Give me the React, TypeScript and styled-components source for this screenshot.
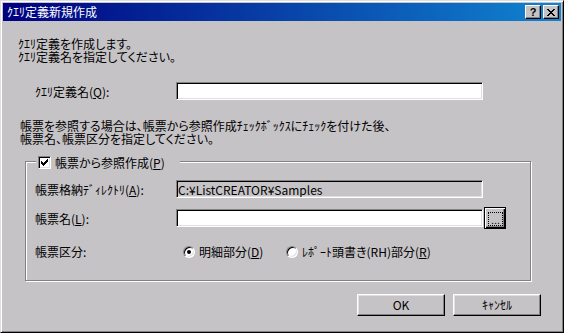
import React from "react";
import styled, { createGlobalStyle } from "styled-components";

const FACE = "#c6c3c6";
const LIGHT = "#dfdfdf";
const SHADOW = "#848284";
const DARK = "#000000";

const GlobalStyle = createGlobalStyle`
  html, body { margin: 0; padding: 0; background: ${FACE}; }
  body {
    font-family: "Noto Sans CJK JP", "Noto Sans", sans-serif;
    font-size: 12px;
    font-feature-settings: "palt";
    color: #000;
  }
  * { box-sizing: border-box; }
`;

const Window = styled.div`
  width: 564px;
  height: 333px;
  display: flex;
  flex-direction: column;
  background: ${FACE};
  border: 1px solid;
  border-color: ${LIGHT} ${DARK} ${DARK} ${LIGHT};
  box-shadow: inset 1px 1px 0 #fff, inset -1px -1px 0 ${SHADOW};
  padding: 2px;
`;

const TitleBar = styled.div`
  height: 18px;
  display: flex;
  align-items: center;
  gap: 2px;
  padding: 0 2px;
  background: linear-gradient(to right, #000080, #1084d0);
  color: #fff;
`;

const TitleText = styled.span`
  flex: 1;
  padding-left: 2px;
  font-size: 12px;
  line-height: 18px;
  white-space: nowrap;
`;

const CaptionButton = styled.div`
  width: 16px;
  height: 14px;
  display: flex;
  align-items: center;
  justify-content: center;
  background: ${FACE};
  border: 1px solid;
  border-color: #fff ${DARK} ${DARK} #fff;
  box-shadow: inset -1px -1px 0 ${SHADOW};
  color: #000;
  font: bold 11px "Liberation Sans", Arial, sans-serif;
  line-height: 12px;
`;

const Body = styled.div`
  flex: 1;
  display: flex;
  flex-direction: column;
  align-items: flex-start;
  padding: 16px 0 0 0;
`;

const Para = styled.div<{ $indent: number; $top: number }>`
  margin: ${(p) => p.$top}px 0 0 ${(p) => p.$indent}px;
  line-height: 13px;
  white-space: nowrap;
`;

const Line = styled.div`
  height: 13px;
`;

const FieldRow = styled.div<{ $indent: number; $top: number }>`
  display: grid;
  grid-template-columns: 140px 307px auto;
  column-gap: 1px;
  align-items: center;
  margin: ${(p) => p.$top}px 0 0 ${(p) => p.$indent}px;
`;

const Label = styled.span`
  line-height: 13px;
  white-space: nowrap;
`;

const TextBox = styled.input<{ $dim?: boolean }>`
  width: 307px;
  height: 18px;
  margin: 0;
  padding: 0 1px;
  background: ${(p) => (p.$dim ? FACE : "#fff")};
  border: 1px solid;
  border-color: ${SHADOW} #fff #fff ${SHADOW};
  box-shadow: inset 1px 1px 0 ${DARK}, inset -1px -1px 0 ${LIGHT};
  font: inherit;
  font-size: 12px;
  line-height: 16px;
  color: #000;
  outline: none;
`;

const GroupBox = styled.div`
  margin: 16px 0 0 22px;
  width: 506px;
  border: 1px solid ${SHADOW};
  box-shadow: inset 1px 1px 0 #fff, 1px 1px 0 #fff;
  padding: 0 0 22px 0;
  display: flex;
  flex-direction: column;
  align-items: flex-start;
`;

const Legend = styled.label`
  display: flex;
  align-items: center;
  gap: 4px;
  width: 144px;
  height: 13px;
  margin: -6px 0 0 10px;
  padding-left: 2px;
  background: ${FACE};
  line-height: 13px;
  white-space: nowrap;
`;

const CheckBox = styled.span`
  width: 13px;
  height: 13px;
  flex-shrink: 0;
  display: flex;
  align-items: center;
  justify-content: center;
  background: #fff;
  border: 1px solid;
  border-color: ${SHADOW} #fff #fff ${SHADOW};
  box-shadow: inset 1px 1px 0 ${DARK}, inset -1px -1px 0 ${LIGHT};
`;

const BrowseButton = styled.button`
  width: 22px;
  height: 22px;
  margin: 0;
  padding: 4px 2px 2px 3px;
  display: flex;
  background: ${FACE};
  border: 1px solid #000;
  box-shadow: inset 1px 1px 0 #fff, inset -1px -1px 0 #000, inset -2px -2px 0 ${SHADOW};
`;

const FocusRect = styled.span`
  flex: 1;
  display: flex;
  align-items: flex-end;
  justify-content: center;
  border: 1px dotted #000;
  font: 11px "Liberation Sans", Arial, sans-serif;
  line-height: 10px;
  color: #000;
`;

const RadioGroup = styled.div`
  display: flex;
  align-items: center;
  padding-left: 7px;
`;

const RadioOption = styled.label<{ $width?: number }>`
  display: flex;
  align-items: center;
  gap: 4px;
  width: ${(p) => (p.$width ? `${p.$width}px` : "auto")};
  line-height: 13px;
  white-space: nowrap;
`;

const RadioCircle = styled.span<{ $checked?: boolean }>`
  width: 12px;
  height: 12px;
  flex-shrink: 0;
  border-radius: 50%;
  display: flex;
  align-items: center;
  justify-content: center;
  background: #fff;
  border: 1px solid;
  border-color: ${SHADOW} #fff #fff ${SHADOW};
  box-shadow: inset 1px 1px 0 ${DARK}, inset -1px -1px 0 ${LIGHT};
  &::after {
    content: "";
    width: 4px;
    height: 4px;
    border-radius: 50%;
    background: ${(p) => (p.$checked ? "#000" : "transparent")};
  }
`;

const ButtonRow = styled.div`
  align-self: stretch;
  display: flex;
  justify-content: flex-end;
  gap: 8px;
  margin-top: 13px;
  padding-right: 20px;
`;

const PushButton = styled.button`
  width: 88px;
  height: 22px;
  margin: 0;
  padding: 0;
  background: ${FACE};
  border: 1px solid;
  border-color: #fff ${DARK} ${DARK} #fff;
  box-shadow: inset -1px -1px 0 ${SHADOW}, inset 1px 1px 0 ${LIGHT};
  font: inherit;
  font-size: 12px;
  line-height: 18px;
  color: #000;
`;

const CheckMark = () => (
  <svg width="7" height="7" viewBox="0 0 7 7" shapeRendering="crispEdges">
    <path
      d="M0 2h1v3H0z M1 3h1v3H1z M2 4h1v3H2z M3 3h1v3H3z M4 2h1v3H4z M5 1h1v3H5z M6 0h1v3H6z"
      fill="#000"
    />
  </svg>
);

const CloseGlyph = () => (
  <svg width="8" height="7" viewBox="0 0 8 7" shapeRendering="crispEdges">
    <path
      d="M0 0h2v1H0z M6 0h2v1H6z M1 1h2v1H1z M5 1h2v1H5z M2 2h4v1H2z M3 3h2v1H3z M2 4h4v1H2z M1 5h2v1H1z M5 5h2v1H5z M0 6h2v1H0z M6 6h2v1H6z"
      fill="#000"
    />
  </svg>
);

export default function App() {
  return (
    <>
      <GlobalStyle />
      <Window>
        <TitleBar>
          <TitleText>ｸｴﾘ定義新規作成</TitleText>
          <CaptionButton>?</CaptionButton>
          <CaptionButton>
            <CloseGlyph />
          </CaptionButton>
        </TitleBar>
        <Body>
          <Para $indent={15} $top={0}>
            <Line>ｸｴﾘ定義を作成します。</Line>
            <Line>ｸｴﾘ定義名を指定してください。</Line>
          </Para>
          <FieldRow $indent={32} $top={19}>
            <Label>
              ｸｴﾘ定義名(<u>Q</u>):
            </Label>
            <TextBox defaultValue="" />
          </FieldRow>
          <Para $indent={17} $top={19}>
            <Line>帳票を参照する場合は、帳票から参照作成ﾁｪｯｸﾎﾞｯｸｽにﾁｪｯｸを付けた後、</Line>
            <Line>帳票名、帳票区分を指定してください。</Line>
          </Para>
          <GroupBox>
            <Legend>
              <CheckBox>
                <CheckMark />
              </CheckBox>
              <span>
                帳票から参照作成(<u>P</u>)
              </span>
            </Legend>
            <FieldRow $indent={9} $top={11}>
              <Label>
                帳票格納ﾃﾞｨﾚｸﾄﾘ(<u>A</u>):
              </Label>
              <TextBox $dim readOnly defaultValue="C:¥ListCREATOR¥Samples" />
            </FieldRow>
            <FieldRow $indent={9} $top={9}>
              <Label>
                帳票名(<u>L</u>):
              </Label>
              <TextBox defaultValue="" />
              <BrowseButton>
                <FocusRect>...</FocusRect>
              </BrowseButton>
            </FieldRow>
            <FieldRow $indent={9} $top={16}>
              <Label>帳票区分:</Label>
              <RadioGroup>
                <RadioOption $width={103}>
                  <RadioCircle $checked />
                  <span>
                    明細部分(<u>D</u>)
                  </span>
                </RadioOption>
                <RadioOption>
                  <RadioCircle />
                  <span>
                    ﾚﾎﾟｰﾄ頭書き(RH)部分(<u>R</u>)
                  </span>
                </RadioOption>
              </RadioGroup>
            </FieldRow>
          </GroupBox>
          <ButtonRow>
            <PushButton>OK</PushButton>
            <PushButton>ｷｬﾝｾﾙ</PushButton>
          </ButtonRow>
        </Body>
      </Window>
    </>
  );
}
